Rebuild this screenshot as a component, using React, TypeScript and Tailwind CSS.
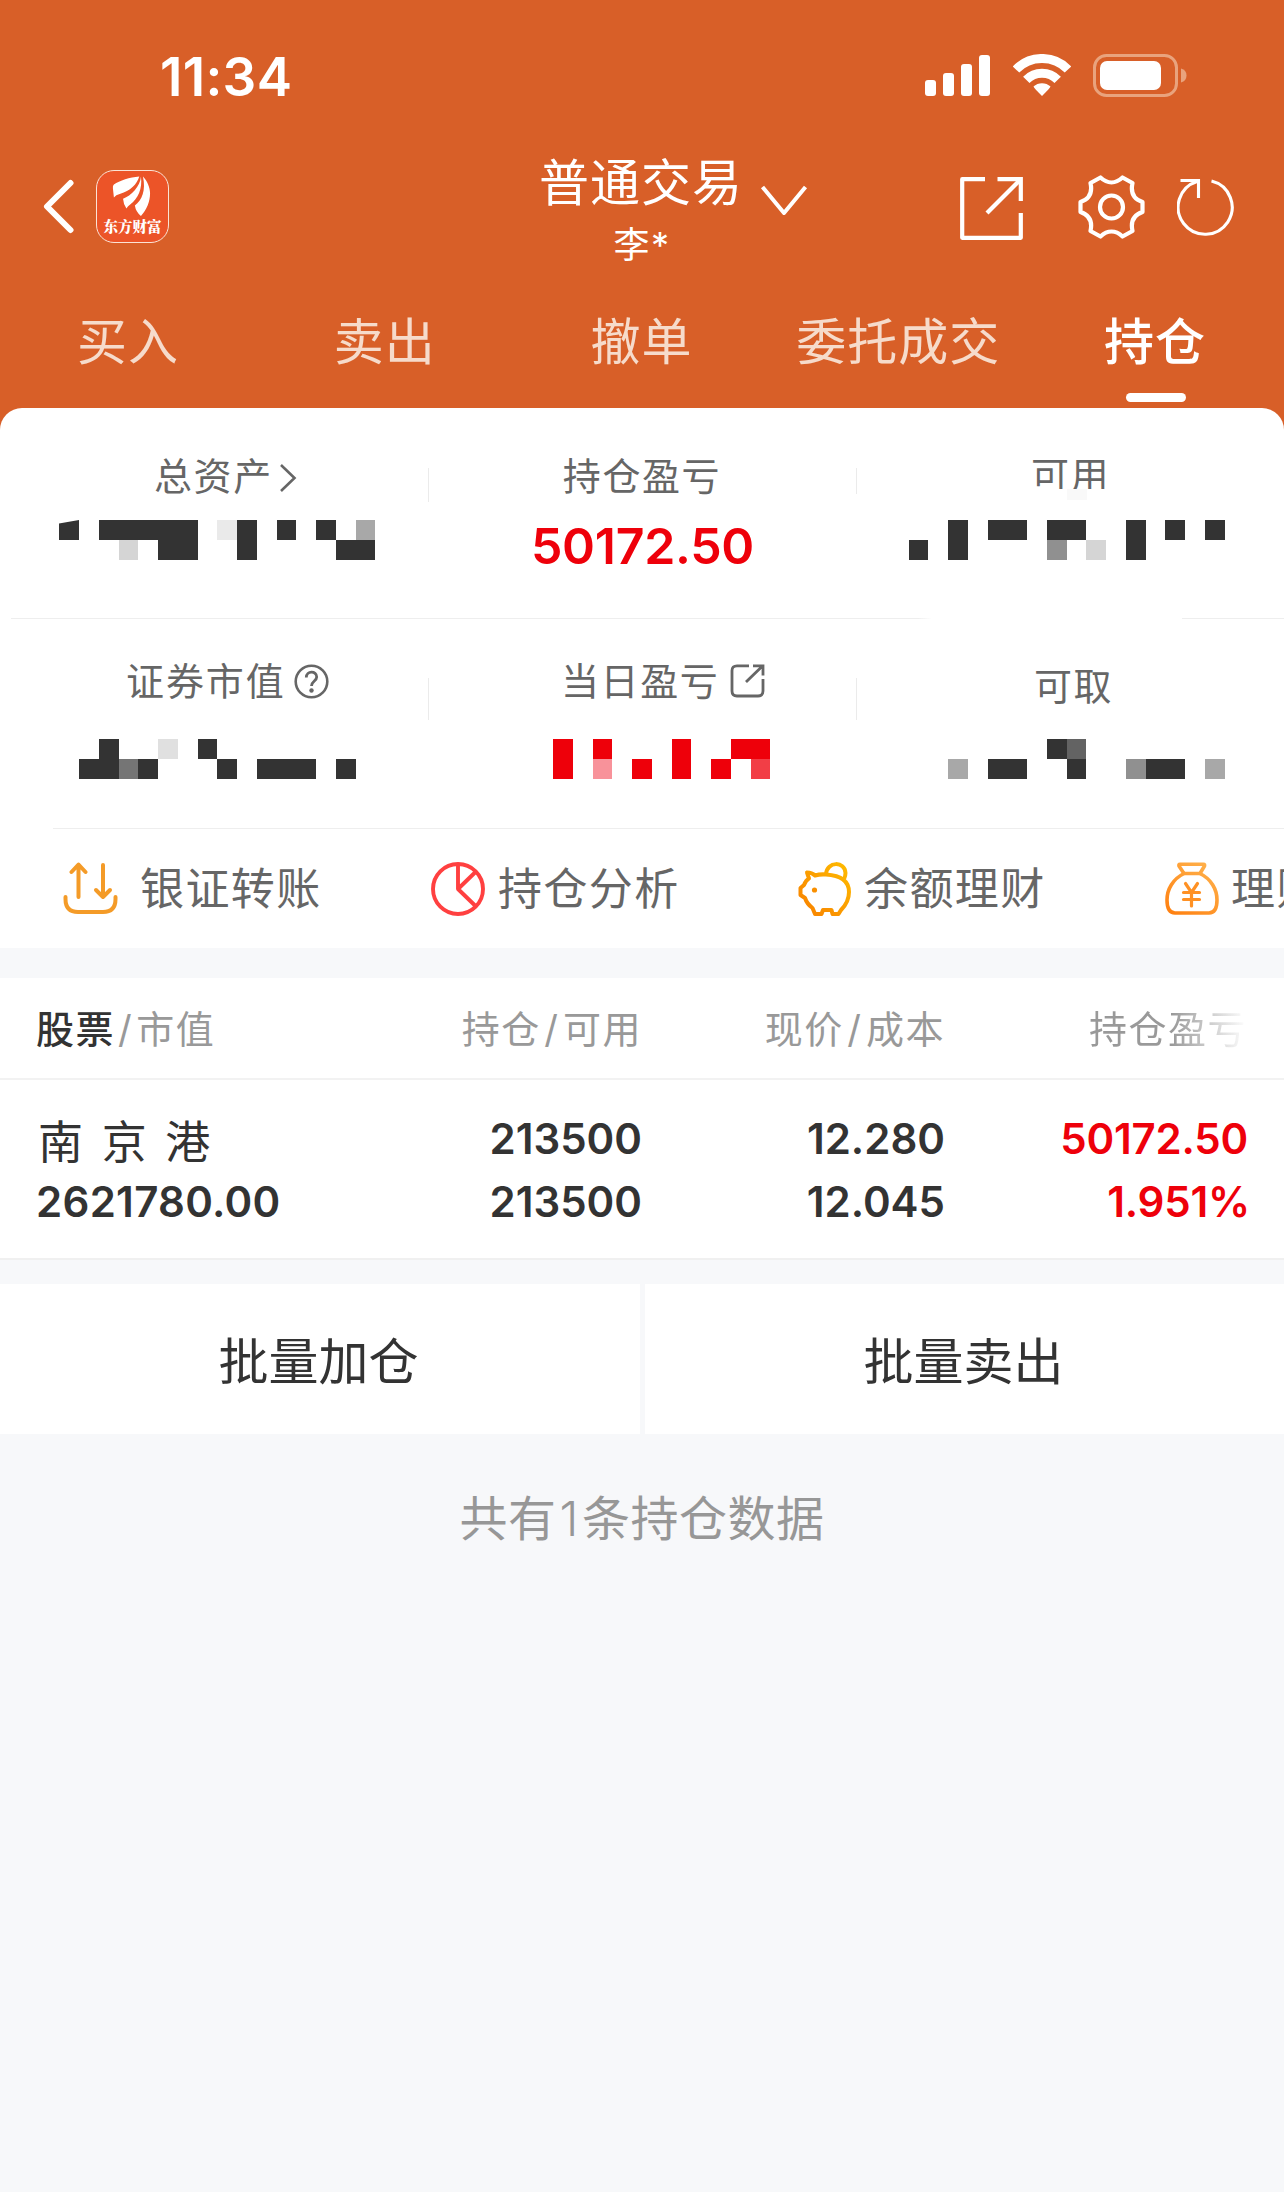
import React from "react";

type Block = [x0: number, x1: number, row: 0 | 1 | 2, color?: string];

const DARK = "#333333";
const RED = "#ee000a";

function Mosaic({ left, blocks, notch }: { left: number; blocks: Block[]; notch?: boolean }) {
  return (
    <svg className="block h-10 w-[428px] shrink-0" viewBox={`${left} 0 428 40`} shapeRendering="crispEdges">
      {blocks.map(([x0, x1, row, color], i) => (
        <rect key={i} x={x0} y={row === 1 ? 20 : 0} width={x1 - x0} height={row === 2 ? 40 : 20} fill={color ?? DARK} />
      ))}
      {notch && <path d="M59 0H79L59 3.6Z" fill="#fff" shapeRendering="auto" />}
    </svg>
  );
}

const totalAssets: Block[] = [
  [59, 79, 0], [99, 198, 0], [217, 237, 0, "#eaeaea"], [237, 257, 2], [277, 296, 0], [316, 336, 0],
  [356, 375, 0, "#a8a8a8"], [119, 138, 1, "#d5d5d5"], [158, 198, 1], [336, 375, 1],
];
const available: Block[] = [
  [909, 928, 1], [948, 968, 2], [988, 1027, 0], [1047, 1086, 0], [1047, 1067, 1, "#909090"],
  [1086, 1106, 1, "#d5d5d5"], [1126, 1146, 2], [1165, 1185, 0], [1205, 1225, 0],
];
const marketValue: Block[] = [
  [99, 119, 0], [158, 178, 0, "#e0e0e0"], [198, 217, 0], [79, 119, 1], [119, 138, 1, "#757575"],
  [138, 158, 1], [217, 237, 1], [257, 316, 1], [336, 356, 1],
];
const dayProfit: Block[] = [
  [553, 573, 2, RED], [593, 612, 0, RED], [593, 612, 1, "#f8929a"], [632, 652, 1, RED], [672, 691, 2, RED],
  [711, 731, 1, RED], [731, 770, 0, RED], [751, 770, 1, "#f23e46"],
];
const withdrawable: Block[] = [
  [948, 968, 1, "#a8a8a8"], [988, 1027, 1], [1047, 1067, 0], [1067, 1086, 0, "#636363"], [1067, 1086, 1],
  [1126, 1146, 1, "#909090"], [1146, 1185, 1], [1205, 1225, 1, "#a8a8a8"],
];

function StatusBar() {
  return (
    <div className="flex h-[154px] items-start justify-between pl-[160px] pr-[96px] text-white">
      <div className="mt-[51px] text-[53px] leading-[53px] font-semibold tracking-[0.3px]">11:34</div>
      <div className="mt-[54px] flex">
        <svg className="h-[43px] w-[66px]" viewBox="0 0 66 43" fill="#fff">
          <rect x="0" y="26" width="11" height="16" rx="3" />
          <rect x="18" y="19" width="11" height="23" rx="3" />
          <rect x="36" y="10" width="11" height="32" rx="3" />
          <rect x="54" y="1" width="11" height="41" rx="3" />
        </svg>
        <svg className="ml-[22px] h-[43px] w-[58px]" viewBox="0 0 58 43" fill="none">
          <path d="M3 15.5C17 .8 41 .8 55 15.5" stroke="#fff" strokeWidth="9" />
          <path d="M13.3 25.8C22 17 36 17 44.7 25.8" stroke="#fff" strokeWidth="9" />
          <path d="M20.5 32.5C25 28 33 28 37.500 32.5Q37 34 29 42Q21 34 20.500 32.500Z" fill="#fff" />
        </svg>
        <svg className="ml-[21px] h-[43px] w-[96px]" viewBox="0 0 96 43" fill="none">
          <rect x="2.500" y="1.500" width="82" height="40" rx="12" stroke="#e9a37d" strokeWidth="3" />
          <rect x="8" y="7" width="61" height="29" rx="7" fill="#fff" />
          <path d="M89 14.500Q94.500 16 94.500 21.500Q94.500 27 89 28.500Z" fill="#e9a37d" />
        </svg>
      </div>
    </div>
  );
}

function Logo() {
  return (
    <div className="relative ml-[22px] mt-[16px] h-[73px] w-[73px] overflow-hidden rounded-[18px] border-[1.5px] border-[#fbe3d6] bg-[#ec5428]">
      <svg className="absolute left-[-1.5px] top-[-1.5px] h-[73px] w-[74px]" viewBox="0 0 219 216" fill="#fff">
        <path d="M128 19C100 22 70 30 53 43Q49 47 50 54L53 81Q58 74 72 70C100 62 122 42 128 19Z" />
        <path d="M133 19C131 48 104 76 80 85Q81 101 90 114Q94 106 102 101C124 84 138 56 133 19Z" />
        <path d="M139 19C148 62 136 88 115 105Q118 124 133 136C150 118 160 94 160 69C160 50 151 32 139 19Z" />
      </svg>
      <div className="absolute inset-x-[-6px] top-[46px] text-center font-['Noto_Serif_CJK_SC','Noto_Sans_CJK_SC',serif] text-[14.5px] leading-[18px] font-black text-white">
        东方财富
      </div>
    </div>
  );
}

function TitleBar() {
  return (
    <div className="flex h-[130px] items-start text-white">
      <svg className="ml-[43px] mt-[25px] h-[55px] w-[31px]" viewBox="0 0 31 55" fill="none" stroke="#fff" strokeWidth="6" strokeLinecap="round" strokeLinejoin="round">
        <path d="M27.500 4L4 27.500L27.500 51" />
      </svg>
      <Logo />
      <div className="ml-[372px] flex w-[200px] flex-col items-center whitespace-nowrap">
        <div className="mt-[3px] text-[50px] leading-[52px] tracking-[1px]">普通交易</div>
        <div className="mt-[17px] pl-[2px] text-[36px] leading-[38px] tracking-[1.500px]">李*</div>
      </div>
      <svg className="ml-[19px] mt-[30px] h-[34px] w-[48px]" viewBox="0 0 48 34" fill="none" stroke="#fff" strokeWidth="4" strokeLinejoin="round">
        <path d="M2.500 3L24 29L45.500 3" />
      </svg>
      <svg className="ml-[152px] mt-[23px] h-[63px] w-[63px]" viewBox="0 0 63 63" fill="none" stroke="#fff" strokeWidth="4.200" strokeLinejoin="round">
        <path d="M25 2.200H2.200V60.800H60.800V36" />
        <path d="M37.500 2.200H60.800V24" strokeLinejoin="miter" />
        <path d="M60 3L27 36" />
      </svg>
      <svg className="ml-[55px] mt-[21px] h-[64px] w-[67px]" viewBox="0 0 66 64" fill="none" stroke="#fff" strokeWidth="4.200" strokeLinejoin="round">
        <path d="M22 2.500L12 8C14 17 11 24 2 27V37C11 40 14 47 12 56L22 61.500C29 55 37 55 44 61.500L54 56C52 47 55 40 64 37V27C55 24 52 17 54 8L44 2.500C37 9 29 9 22 2.500Z" />
        <circle cx="33" cy="32" r="11.500" />
      </svg>
      <svg className="ml-[32px] mt-[24px] h-[59px] w-[58px]" viewBox="0 0 58 59" fill="none" stroke="#fff" strokeWidth="3.100">
        <path d="M34.500 3A27 27 0 1 1 20 3.500" />
        <path d="M3.500 2.500H21.500V20" />
      </svg>
    </div>
  );
}

const tabs = ["买入", "卖出", "撤单", "委托成交", "持仓"];

function Tabs() {
  return (
    <div className="grid h-[124px] grid-cols-5 whitespace-nowrap">
      {tabs.map((t) =>
        t === "持仓" ? (
          <div key={t} className="flex flex-col items-center pt-[32px] font-medium text-white">
            <div className="pr-px text-[50px] leading-[52px] tracking-[1px]">{t}</div>
            <div className="mt-[25px] h-[9px] w-[60px] rounded-full bg-white" />
          </div>
        ) : (
          <div key={t} className="flex flex-col items-center pt-[32px] text-[#f6dbcb]">
            <div className="pr-px text-[50px] leading-[52px] tracking-[1px]">{t}</div>
          </div>
        ),
      )}
    </div>
  );
}

function Summary() {
  return (
    <section className="rounded-t-[22px] bg-white text-[#666]">
      <div className="flex h-[210px] text-[38px] leading-[40px] tracking-[1.600px]">
        <div className="w-[428px] pt-[48px]">
          <div className="flex h-10 pl-[154px]">
            总资产
            <svg className="ml-[6px] mt-[7px] h-[30px] w-[18px]" viewBox="0 0 18 30" fill="none" stroke="#666" strokeWidth="2.600">
              <path d="M2 2L15.500 15L2 28" />
            </svg>
          </div>
          <div className="mt-[24px]">
            <Mosaic left={0} blocks={totalAssets} notch />
          </div>
        </div>
        <div className="mt-[60px] h-[34px] w-px bg-[#ebebeb]" />
        <div className="w-[427px] pt-[48px] text-center">
          <div className="-ml-px">持仓盈亏</div>
          <div className="mt-[25px] text-[50px] leading-[50px] font-semibold tracking-[-0.300px] text-[#ee000a]">50172.50</div>
        </div>
        <div className="mt-[60px] h-[26px] w-px bg-[#ebebeb]" />
        <div className="w-[427px] pt-[47px]">
          <div className="h-[34px] pl-[174px]">可用</div>
          <div className="relative h-[31px] bg-white pl-[210px]">
            <div className="h-[11px] w-5 bg-[#f9f9f9]" />
          </div>
          <Mosaic left={857} blocks={available} />
        </div>
      </div>
      <div className="flex h-px">
        <div className="ml-[11px] w-[907px] bg-[#eeeeee]" />
        <div className="w-[14px] bg-linear-to-r from-[#eeeeee] to-white" />
        <div className="ml-[250px] flex-1 bg-[#eeeeee]" />
      </div>
      <div className="flex h-[209px] text-[38px] leading-[40px] tracking-[1.600px]">
        <div className="w-[428px] pt-[42px]">
          <div className="flex h-10 pl-[126px] tracking-[1.900px]">
            证券市值
            <svg className="ml-[8px] mt-[3px] h-[35px] w-[35px]" viewBox="0 0 35 35" fill="none" stroke="#666" strokeWidth="2.600">
              <circle cx="17.500" cy="17.500" r="15.800" />
              <path d="M12.300 13.500C12.300 6.500 22.700 6.500 22.700 13C22.700 17 17.500 17 17.500 22" strokeWidth="2.800" />
              <circle cx="17.500" cy="26.500" r="2.200" fill="#666" stroke="none" />
            </svg>
          </div>
          <div className="mt-[38px]">
            <Mosaic left={0} blocks={marketValue} />
          </div>
        </div>
        <div className="mt-[59px] h-[42px] w-px bg-[#ebebeb]" />
        <div className="w-[427px] pt-[42px]">
          <div className="flex h-10 pl-[132px]">
            当日盈亏
            <svg className="ml-[11px] mt-[3px] h-[34px] w-[35px]" viewBox="0 0 35 34" fill="none" stroke="#666" strokeWidth="2.800">
              <path d="M19 1.800H7Q2 1.800 2 6.800V27Q2 32 7 32H28Q33 32 33 27V15" />
              <path d="M23 1.800H33V11.500M32.500 2L16 18" />
            </svg>
          </div>
          <div className="mt-[38px]">
            <Mosaic left={429} blocks={dayProfit} />
          </div>
        </div>
        <div className="mt-[59px] h-[42px] w-px bg-[#ebebeb]" />
        <div className="w-[427px] pt-[47px]">
          <div className="h-10 pl-[177px]">可取</div>
          <div className="mt-[33px]">
            <Mosaic left={857} blocks={withdrawable} />
          </div>
        </div>
      </div>
      <div className="ml-[53px] h-px bg-[#eeeeee]" />
    </section>
  );
}

function TransferIcon() {
  return (
    <svg className="h-[54px] w-[55px]" viewBox="0 0 55 54" fill="none" stroke="#f49b28" strokeWidth="4" strokeLinecap="round" strokeLinejoin="round">
      <path d="M15.500 35V3M8.500 10L15.500 2.500L22.500 10" />
      <path d="M40 3V35M33 28L40 35L47 28" />
      <path d="M2.500 35V37Q2.500 50 15 50H40Q52.500 50 52.500 37V35" />
    </svg>
  );
}

function PieIcon() {
  return (
    <svg className="h-[54px] w-[54px]" viewBox="0 0 54 54" fill="none" stroke="#ff4040" strokeWidth="3.900">
      <circle cx="27" cy="27" r="25" />
      <path d="M27 3V27L44.500 10M27 27L44.500 44" strokeLinejoin="round" />
    </svg>
  );
}

function PigIcon() {
  return (
    <svg className="h-[54px] w-[54px]" viewBox="0 0 54 54" fill="none" stroke="url(#pig)" strokeWidth="4" strokeLinejoin="round">
      <defs>
        <linearGradient id="pig" x1="0" y1="54" x2="54" y2="0" gradientUnits="userSpaceOnUse">
          <stop offset="0.200" stopColor="#f98a00" />
          <stop offset="1" stopColor="#ffbf00" />
        </linearGradient>
      </defs>
      <path d="M28 12C29 -1 47 -1 47.500 11Q47.500 14 46 17" />
      <path d="M9 10.500Q14 10.500 17 13.500Q22 12 28 12.500C43 13.500 51 19 51 30C51 39 47 44 43 48L40.500 52H34.500L33.500 48H25L23.500 52H17L14.500 46Q9 42 7 36L2.500 33V26L6 23Q8 18 11 16.500Z" />
      <circle cx="16.500" cy="28" r="2.600" fill="#f98f00" stroke="none" />
    </svg>
  );
}

function BagIcon() {
  return (
    <svg className="h-[54px] w-[54px]" viewBox="0 0 54 54" fill="none" stroke="url(#bag)" strokeWidth="3.600" strokeLinejoin="round" strokeLinecap="round">
      <defs>
        <linearGradient id="bag" x1="0" y1="54" x2="40" y2="0" gradientUnits="userSpaceOnUse">
          <stop offset="0" stopColor="#ff7d0c" />
          <stop offset="1" stopColor="#ffb04a" />
        </linearGradient>
      </defs>
      <path d="M15 2.200H38.500Q40 2.200 39.500 4L35 11.500H19L14 4Q13.500 2.200 15 2.200Z" />
      <path d="M19 11.500C8 17 2 27 2 38Q2 51 10 51H44Q52 51 52 38C52 27 46 17 35 11.500" />
      <path d="M20.500 21.500L26.500 30.500L32.500 21.500M26.500 30.500V44M18.500 30.500H34.500M18.500 37.500H34.500" strokeWidth="3.200" stroke="#ff9124" />
    </svg>
  );
}

function Actions() {
  return (
    <nav className="flex h-[119px] overflow-hidden bg-white pl-[63px] text-[44px] leading-[46px] tracking-[1.400px] whitespace-nowrap text-[#666]">
      <div className="flex w-[368px] shrink-0 items-center">
        <TransferIcon />
        <span className="ml-[22px]">银证转账</span>
      </div>
      <div className="flex w-[367px] shrink-0 items-center">
        <PieIcon />
        <span className="ml-[13px]">持仓分析</span>
      </div>
      <div className="flex w-[367px] shrink-0 items-center">
        <PigIcon />
        <span className="ml-[12px]">余额理财</span>
      </div>
      <div className="flex shrink-0 items-center">
        <BagIcon />
        <span className="ml-[12px]">理财</span>
      </div>
    </nav>
  );
}

function Holdings() {
  return (
    <section className="bg-white">
      <div className="grid h-[102px] grid-cols-[304px_302px_303px_302px] items-center border-b-2 border-[#f2f2f2] pt-[3px] pl-[36px] text-right text-[38px] tracking-[1.500px] whitespace-nowrap text-[#999]">
        <div className="text-left">
          <span className="font-medium text-[#333]">股票</span>
          <span className="px-[3px]">/</span>市值
        </div>
        <div>
          持仓<span className="px-[3.500px]">/</span>可用
        </div>
        <div>
          现价<span className="px-[3.500px]">/</span>成本
        </div>
        <div className="bg-linear-to-r from-[#999] from-75% to-[#99999900] to-100% bg-clip-text text-transparent">持仓盈亏</div>
      </div>
      <div className="grid h-[180px] grid-cols-[303px_303px_303px_302px] border-b-2 border-[#f0f0f0] pt-[27px] pl-[36px] text-right text-[42px] leading-[63px] font-[560] whitespace-nowrap text-[#333]">
        <div className="text-left">
          <div className="pl-[2px] text-[45px] font-normal [word-spacing:6px]">
            <span className="relative top-[4px]">南 京 港</span>
          </div>
          <div className="tracking-[0.300px]">2621780.00</div>
        </div>
        <div>
          <div>213500</div>
          <div>213500</div>
        </div>
        <div>
          <div>12.280</div>
          <div>12.045</div>
        </div>
        <div className="text-[#ee000a]">
          <div className="-mr-px tracking-[-0.200px]">50172.50</div>
          <div className="-mr-[3px] tracking-[-0.200px]">1.951%</div>
        </div>
      </div>
    </section>
  );
}

export default function App() {
  return (
    <main className="h-[2192px] w-[1284px] overflow-hidden bg-[#f7f8fa] font-[Inter,'Noto_Sans_CJK_SC',sans-serif]">
      <div className="bg-[#d85f28]">
        <StatusBar />
        <TitleBar />
        <Tabs />
        <Summary />
      </div>
      <Actions />
      <div className="h-[30px]" />
      <Holdings />
      <div className="mt-[24px] flex h-[150px] gap-[5px] text-[50px] leading-[52px] text-[#333]">
        <button className="w-[640px] bg-white pt-[5px] pr-[3px]">批量加仓</button>
        <button className="flex-1 bg-white pt-[5px] pr-[2px]">批量卖出</button>
      </div>
      <p className="mt-[59px] text-center text-[48px] leading-[52px] tracking-[0.500px] text-[#979797]">
        共有<span className="px-[3px] font-light">1</span>条持仓数据
      </p>
    </main>
  );
}
